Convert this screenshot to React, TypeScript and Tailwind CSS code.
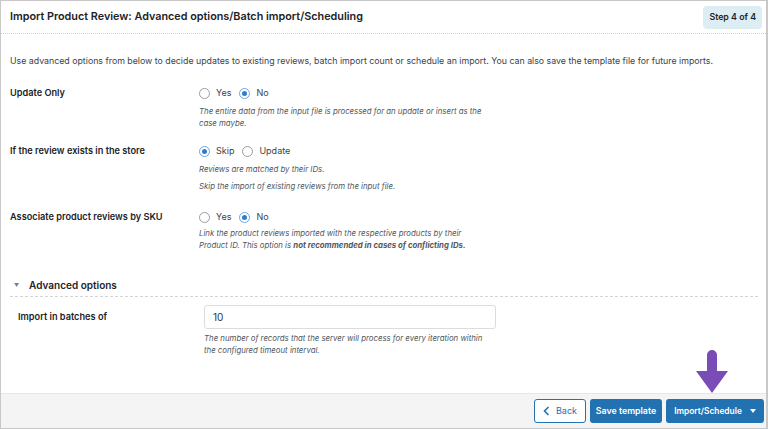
import React from 'react';

function Radio({ checked, label }: { checked?: boolean; label: string }) {
  return (
    <label className="flex items-center gap-[6px]">
      <span
        className={
          'flex h-[11px] w-[11px] items-center justify-center rounded-full border bg-white ' +
          (checked ? 'border-[#6fa6d6]' : 'border-[#9a9da1]')
        }
      >
        {checked && <span className="h-[5px] w-[5px] rounded-full bg-[#2f7ccf]" />}
      </span>
      <span className="text-[9px] text-[#3c434a]">{label}</span>
    </label>
  );
}

function Row({
  label,
  top,
  children,
}: {
  label: string;
  top: string;
  children: React.ReactNode;
}) {
  return (
    <div className={'flex ' + top}>
      <div className="w-[188px] shrink-0 text-[9.2px] font-semibold leading-[16px] text-[#1d2327]">
        {label}
      </div>
      <div className="flex-1">{children}</div>
    </div>
  );
}

function Desc({ children, className = '' }: { children: React.ReactNode; className?: string }) {
  return (
    <p className={'w-[290px] text-[7.8px] italic leading-[12px] text-[#50575e] ' + className}>
      {children}
    </p>
  );
}

export default function App() {
  return (
    <div
      className="relative flex h-[429px] w-[768px] flex-col border border-r-2 border-[#c8c8c8] bg-white"
      style={{ fontFamily: 'Inter, "Liberation Sans", sans-serif' }}
    >
      <header className="flex h-[33px] shrink-0 items-center justify-between border-b border-dotted border-[#cfcfcf] pl-[9px] pr-[4px]">
        <h1 className="text-[10.8px] font-semibold text-[#1d2327]">
          Import Product Review: Advanced options/Batch import/Scheduling
        </h1>
        <span className="flex h-[23px] items-center rounded-[4px] bg-[#dcedf4] px-[6px] text-[8.8px] font-semibold text-[#1d2327]">
          Step 4 of 4
        </span>
      </header>

      <main className="flex-1 pl-[9px] pr-[8px]">
        <p className="pt-[20px] text-[8.8px] leading-[14px] text-[#3c434a]">
          Use advanced options from below to decide updates to existing reviews, batch import count or
          schedule an import. You can also save the template file for future imports.
        </p>

        <Row label="Update Only" top="mt-[17px]">
          <div className="flex h-[16px] items-center gap-[8px] pl-[1px]">
            <Radio label="Yes" />
            <Radio label="No" checked />
          </div>
          <Desc className="mt-[4px] pl-[1px]">
            The entire data from the input file is processed for an update or insert as the case maybe.
          </Desc>
        </Row>

        <Row label="If the review exists in the store" top="mt-[14px]">
          <div className="flex h-[16px] items-center gap-[8px] pl-[1px]">
            <Radio label="Skip" checked />
            <Radio label="Update" />
          </div>
          <Desc className="mt-[4px] pl-[1px]">Reviews are matched by their IDs.</Desc>
          <Desc className="mt-[5px] pl-[1px]">Skip the import of existing reviews from the input file.</Desc>
        </Row>

        <Row label="Associate product reviews by SKU" top="mt-[17px]">
          <div className="flex h-[16px] items-center gap-[8px] pl-[1px]">
            <Radio label="Yes" />
            <Radio label="No" checked />
          </div>
          <Desc className="mt-[2px] pl-[1px]">
            Link the product reviews imported with the respective products by their Product ID. This
            option is <b className="font-bold leading-[12px]">not recommended in cases of conflicting IDs.</b>
          </Desc>
        </Row>

        <div className="mt-[27px] flex h-[19px] items-center gap-[10px] border-b border-dashed border-[#d4d4d4] pb-[3px] pl-[4px]">
          <span className="text-[5px] text-[#787c82]">▼</span>
          <span className="text-[10px] font-semibold text-[#1d2327]">Advanced options</span>
        </div>

        <div className="mt-[8px] flex pl-[8px]">
          <div className="w-[186px] shrink-0 pt-[4px] text-[9.2px] font-semibold leading-[16px] text-[#1d2327]">
            Import in batches of
          </div>
          <div>
            <div className="flex h-[24px] w-[292px] items-center rounded-[3px] border border-[#dcdcde] px-[8px] text-[10px] text-[#2c3338]">
              10
            </div>
            <Desc className="mt-[3px]">
              The number of records that the server will process for every iteration within the
              configured timeout interval.
            </Desc>
          </div>
        </div>
      </main>

      <footer className="flex h-[35px] shrink-0 items-center justify-end gap-[4px] border-t border-[#e6e6e6] bg-[#f4f4f4] pr-[2px]">
        <button className="flex h-[24px] w-[52px] items-center justify-center gap-[6px] rounded-[3px] border border-[#2271b1] bg-white text-[9px] text-[#2271b1]">
          <svg width="7" height="10" viewBox="0 0 7 10" fill="none">
            <path d="M5.5 1 1.5 5l4 4" stroke="#2271b1" strokeWidth="1.6" />
          </svg>
          Back
        </button>
        <button className="h-[24px] w-[72px] rounded-[3px] bg-[#2271b1] text-[8.8px] font-semibold text-white">
          Save template
        </button>
        <button className="flex h-[24px] w-[98px] items-center justify-center gap-[8px] rounded-[3px] bg-[#2271b1] text-[8.4px] font-semibold text-white">
          Import/Schedule
          <svg width="6" height="4" viewBox="0 0 6 4">
            <path d="M0 0h6L3 4z" fill="white" />
          </svg>
        </button>
      </footer>

      <svg
        className="absolute left-[694px] top-[349px]"
        width="34"
        height="44"
        viewBox="0 0 34 44"
      >
        <path d="M12 5a5 5 0 0 1 10 0v16h11L17 43 1 21h11z" fill="#7a4cb6" />
      </svg>
    </div>
  );
}
